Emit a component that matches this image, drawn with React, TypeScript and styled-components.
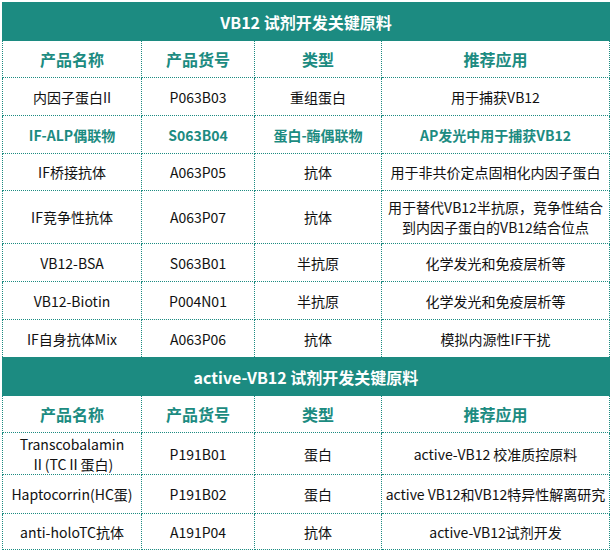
import styled, { createGlobalStyle } from "styled-components";

const teal = "#1c8b81";
const line = `1px dotted ${teal}`;

const GlobalStyle = createGlobalStyle`
	html, body {
		margin: 0;
		padding: 0;
		background: #fff;
	}
	body {
		font-family: "Noto Sans CJK SC", "Noto Sans", sans-serif;
	}
`;

const Page = styled.div`
	padding: 2px 0 0 2px;
`;

const Table = styled.table`
	width: 607px;
	border-collapse: collapse;
	table-layout: fixed;
`;

const Row = styled.tr<{ $h: number }>`
	height: ${(p) => p.$h}px;
`;

const Banner = styled.td`
	background: ${teal};
	color: #fff;
	font-size: 16px;
	font-weight: 700;
	text-align: center;
	padding: 0;
	border: 1px solid ${teal};
	line-height: 20px;
`;

const Head = styled.th`
	border: ${line};
	color: ${teal};
	font-size: 16px;
	font-weight: 700;
	text-align: center;
	padding: 0;
`;

const Cell = styled.td<{ $hot?: boolean }>`
	border: ${line};
	color: ${(p) => (p.$hot ? teal : "#111")};
	font-size: 14px;
	font-weight: ${(p) => (p.$hot ? 700 : 400)};
	line-height: 20px;
	text-align: center;
	padding: 0;
	white-space: nowrap;
`;

interface IItem {
	name: React.ReactNode;
	code: string;
	kind: string;
	use: React.ReactNode;
	h: number;
	hot?: boolean;
}

const vb12: IItem[] = [
	{ name: "内因子蛋白II", code: "P063B03", kind: "重组蛋白", use: "用于捕获VB12", h: 38 },
	{ name: "IF-ALP偶联物", code: "S063B04", kind: "蛋白-酶偶联物", use: "AP发光中用于捕获VB12", h: 38, hot: true },
	{ name: "IF桥接抗体", code: "A063P05", kind: "抗体", use: "用于非共价定点固相化内因子蛋白", h: 37 },
	{
		name: "IF竞争性抗体",
		code: "A063P07",
		kind: "抗体",
		use: (
			<>
				用于替代VB12半抗原，竞争性结合
				<br />
				到内因子蛋白的VB12结合位点
			</>
		),
		h: 53,
	},
	{ name: "VB12-BSA", code: "S063B01", kind: "半抗原", use: "化学发光和免疫层析等", h: 38 },
	{ name: "VB12-Biotin", code: "P004N01", kind: "半抗原", use: "化学发光和免疫层析等", h: 38 },
	{ name: "IF自身抗体Mix", code: "A063P06", kind: "抗体", use: "模拟内源性IF干扰", h: 38 },
];

const active: IItem[] = [
	{
		name: (
			<>
				Transcobalamin
				<br />
				Ⅱ(TCⅡ蛋白)
			</>
		),
		code: "P191B01",
		kind: "蛋白",
		use: "active-VB12 校准质控原料",
		h: 42,
	},
	{ name: "Haptocorrin(HC蛋)", code: "P191B02", kind: "蛋白", use: "active VB12和VB12特异性解离研究", h: 39 },
	{ name: "anti-holoTC抗体", code: "A191P04", kind: "抗体", use: "active-VB12试剂开发", h: 36 },
];

function Section({ title, items }: { title: string; items: IItem[] }) {
	return (
		<>
			<Row $h={38}>
				<Banner colSpan={4}>{title}</Banner>
			</Row>
			<Row $h={37}>
				<Head>产品名称</Head>
				<Head>产品货号</Head>
				<Head>类型</Head>
				<Head>推荐应用</Head>
			</Row>
			{items.map((item) => (
				<Row $h={item.h} key={item.code}>
					<Cell $hot={item.hot}>{item.name}</Cell>
					<Cell $hot={item.hot}>{item.code}</Cell>
					<Cell $hot={item.hot}>{item.kind}</Cell>
					<Cell $hot={item.hot}>{item.use}</Cell>
				</Row>
			))}
		</>
	);
}

function App() {
	return (
		<Page>
			<GlobalStyle />
			<Table>
				<colgroup>
					<col style={{ width: 139 }} />
					<col style={{ width: 113 }} />
					<col style={{ width: 127 }} />
					<col style={{ width: 228 }} />
				</colgroup>
				<tbody>
					<Section title="VB12 试剂开发关键原料" items={vb12} />
					<Section title="active-VB12 试剂开发关键原料" items={active} />
				</tbody>
			</Table>
		</Page>
	);
}

export default App;
